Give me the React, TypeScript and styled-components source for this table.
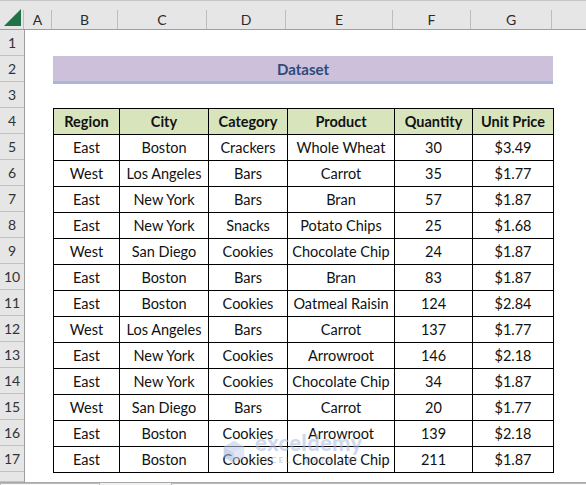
import React from "react";
import styled, { createGlobalStyle } from "styled-components";

const Global = createGlobalStyle`
  html, body { margin: 0; padding: 0; background: #fff; }
  body { font-family: "Lato", "Liberation Sans", sans-serif; }
`;

const COLS = [28, 66, 89, 79, 107, 78, 81];
const LETTERS = ["A", "B", "C", "D", "E", "F", "G"];
const HEADERS = ["Region", "City", "Category", "Product", "Quantity", "Unit Price"];
const DATA: string[][] = [
  ["East", "Boston", "Crackers", "Whole Wheat", "30", "$3.49"],
  ["West", "Los Angeles", "Bars", "Carrot", "35", "$1.77"],
  ["East", "New York", "Bars", "Bran", "57", "$1.87"],
  ["East", "New York", "Snacks", "Potato Chips", "25", "$1.68"],
  ["West", "San Diego", "Cookies", "Chocolate Chip", "24", "$1.87"],
  ["East", "Boston", "Bars", "Bran", "83", "$1.87"],
  ["East", "Boston", "Cookies", "Oatmeal Raisin", "124", "$2.84"],
  ["West", "Los Angeles", "Bars", "Carrot", "137", "$1.77"],
  ["East", "New York", "Cookies", "Arrowroot", "146", "$2.18"],
  ["East", "New York", "Cookies", "Chocolate Chip", "34", "$1.87"],
  ["West", "San Diego", "Bars", "Carrot", "20", "$1.77"],
  ["East", "Boston", "Cookies", "Arrowroot", "139", "$2.18"],
  ["East", "Boston", "Cookies", "Chocolate Chip", "211", "$1.87"],
];

const Page = styled.div`
  width: 586px;
  height: 485px;
  overflow: hidden;
  display: flex;
  flex-direction: column;
  background: #fff;
`;

const TopStrip = styled.div`
  height: 9px;
  flex: none;
  background: #e6e6e6;
  border-top: 1px solid #c6c6c6;
`;

const ColHeaderRow = styled.div`
  display: flex;
  height: 19px;
  flex: none;
  background: #e6e6e6;
  border-bottom: 1px solid #9e9e9e;
`;

const Corner = styled.div`
  width: 24px;
  flex: none;
  border-right: 1px solid #bdbdbd;
  display: flex;
  align-items: flex-end;
  justify-content: flex-end;
  padding: 0 2px 3px 0;
  box-sizing: border-box;
`;

const ColHead = styled.div<{ $w: number }>`
  width: ${(p) => p.$w}px;
  flex: none;
  box-sizing: border-box;
  border-right: 1px solid #bdbdbd;
  display: flex;
  align-items: center;
  justify-content: center;
  font-size: 14px;
  color: #2b2b2b;
  font-family: "Lato", "Liberation Sans", sans-serif;
`;

const Body = styled.div`
  display: flex;
  flex: none;
  height: 452px;
`;

const RowHeads = styled.div`
  width: 25px;
  flex: none;
  background: #e6e6e6;
  border-right: 1px solid #9e9e9e;
  box-sizing: border-box;
  display: flex;
  flex-direction: column;
`;

const RowHead = styled.div<{ $h?: number }>`
  height: ${(p) => p.$h ?? 26}px;
  flex: none;
  box-sizing: border-box;
  border-bottom: 1px solid #c2c2c2;
  display: flex;
  align-items: flex-end;
  justify-content: center;
  padding-bottom: 4px;
  font-size: 14px;
  color: #333;
`;

const Sheet = styled.div`
  flex: 1;
  display: flex;
  position: relative;
`;

const ColA = styled.div`
  width: 28px;
  flex: none;
`;

const Content = styled.div`
  width: 500px;
  flex: none;
  display: flex;
  flex-direction: column;
`;

const Spacer = styled.div<{ $h: number }>`
  height: ${(p) => p.$h}px;
  flex: none;
`;

const Title = styled.div`
  height: 25px;
  flex: none;
  background: #ccc0da;
  border-bottom: 3px solid #a6b8d8;
  display: flex;
  align-items: center;
  justify-content: center;
  font-weight: 700;
  font-size: 15px;
  color: #2c4a7c;
`;

const Table = styled.table`
  border-collapse: collapse;
  table-layout: fixed;
  width: 500px;
  font-family: "Lato", "Liberation Sans", sans-serif;
  font-size: 14.5px;
  color: #111;
`;

const Th = styled.th`
  height: 26px;
  box-sizing: border-box;
  padding: 0 0 1px;
  border: 1.5px solid #000;
  background: #d8e4bc;
  font-weight: 700;
  text-align: center;
  white-space: nowrap;
`;

const Td = styled.td`
  height: 26px;
  box-sizing: border-box;
  padding: 0 0 1px;
  border: 1.5px solid #000;
  text-align: center;
  white-space: nowrap;
`;

const Watermark = styled.div`
  position: absolute;
  left: 197px;
  top: 402px;
  display: flex;
  align-items: flex-start;
  gap: 9px;
  opacity: 0.55;
  pointer-events: none;
`;

const WmIcon = styled.svg`
  margin-top: 8px;
  flex: none;
`;

const WmText = styled.div`
  display: flex;
  flex-direction: column;
  line-height: 1;
`;

const WmBig = styled.span`
  font-family: "Lato", "Liberation Sans", sans-serif;
  font-weight: 900;
  font-size: 22px;
  color: #a9bbe2;
  letter-spacing: 0.3px;
`;

const WmSmall = styled.span`
  font-family: "Lato", "Liberation Sans", sans-serif;
  font-size: 8px;
  letter-spacing: 2.3px;
  color: #9a9a9a;
  margin-top: 2px;
  padding-left: 2px;
`;

const Bottom = styled.div`
  flex: 1;
  display: flex;
  background: #f0f0f0;
  border-top: 1px solid #a8a8a8;
`;

const TabBox = styled.div<{ $w: number; $ml: number }>`
  width: ${(p) => p.$w}px;
  margin-left: ${(p) => p.$ml}px;
  flex: none;
  background: #f6f6f6;
  border-top: 1px solid #bcbcbc;
  border-left: 1px solid #bcbcbc;
  border-right: 1px solid #bcbcbc;
  box-sizing: border-box;
`;

export default function App() {
  return (
    <Page>
      <Global />
      <TopStrip />
      <ColHeaderRow>
        <Corner>
          <svg width="17" height="17" viewBox="0 0 17 17">
            <polygon points="17,0 17,17 0,17" fill="#217346" />
          </svg>
        </Corner>
        {COLS.map((w, i) => (
          <ColHead key={i} $w={w}>
            {LETTERS[i]}
          </ColHead>
        ))}
        <ColHead $w={40} />
      </ColHeaderRow>
      <Body>
        <RowHeads>
          {Array.from({ length: 17 }, (_, i) => (
            <RowHead key={i}>{i + 1}</RowHead>
          ))}
          <RowHead $h={10} />
        </RowHeads>
        <Sheet>
          <ColA />
          <Content>
            <Spacer $h={26} />
            <Title>Dataset</Title>
            <Spacer $h={24} />
            <Table>
              <colgroup>
                {COLS.slice(1).map((w, i) => (
                  <col key={i} style={{ width: w }} />
                ))}
              </colgroup>
              <thead>
                <tr>
                  {HEADERS.map((h) => (
                    <Th key={h}>{h}</Th>
                  ))}
                </tr>
              </thead>
              <tbody>
                {DATA.map((row, r) => (
                  <tr key={r}>
                    {row.map((c, j) => (
                      <Td key={j}>{c}</Td>
                    ))}
                  </tr>
                ))}
              </tbody>
            </Table>
          </Content>
          <Watermark>
            <WmIcon width="24" height="24" viewBox="0 0 26 28">
              <polygon points="13,1 25,8 13,15 1,8" fill="#b9c7e6" />
              <polygon points="1,8 13,15 13,27 1,20" fill="#9fb3de" />
              <polygon points="25,8 13,15 13,27 25,20" fill="#c9d4ec" />
            </WmIcon>
            <WmText>
              <WmBig>exceldemy</WmBig>
              <WmSmall>EXCEL · DATA · BI</WmSmall>
            </WmText>
          </Watermark>
        </Sheet>
      </Body>
      <Bottom>
        <TabBox $w={100} $ml={0} />
        <TabBox $w={420} $ml={71} />
      </Bottom>
    </Page>
  );
}
